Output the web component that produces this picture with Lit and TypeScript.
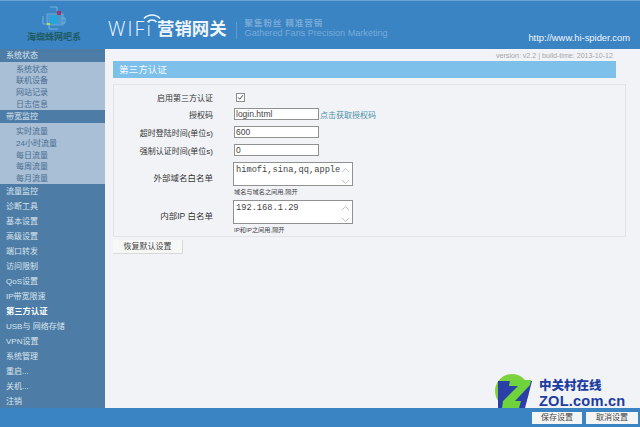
import { LitElement, html, css } from "lit";
import { customElement } from "lit/decorators.js";

@customElement("app-root")
export class AppRoot extends LitElement {
  static styles = css`
    :host { display: block; width: 640px; height: 427px; overflow: hidden; position: relative; font-family: "Liberation Sans", "Noto Sans CJK SC", sans-serif; font-size: 8px; color: #333; background: #f1f3f7; }
    .page { display: flex; flex-direction: column; height: 427px; }
    .top { height: 49px; flex: none; box-sizing: border-box; background: #3a84c4; border-top: 1px solid #6da2d6; display: flex; position: relative; }
    .logo { width: 108px; flex: none; display: flex; flex-direction: column; align-items: center; box-sizing: border-box; }
    .logo svg { margin-top: 5px; }
    .logo span { font-size: 9px; font-weight: 700; line-height: 10px; color: #1f5b63; margin-top: 0; white-space: nowrap; }
    .brand { display: flex; align-items: flex-end; height: 41px; color: #eef5fb; position: relative; }
    .wifi { font-size: 19.500px; letter-spacing: 2.100px; line-height: 26px; font-family: "Open Sans", "Liberation Sans", sans-serif; font-weight: 300; width: 49px; white-space: nowrap; }
    .cn { font-size: 17.400px; font-weight: 700; line-height: 26px; white-space: nowrap; }
    .arc { position: absolute; left: 35px; top: 12px; }
    .sep { width: 1px; height: 17px; background: #5f9bd0; margin: 0 8px 3px 9px; flex: none; }
    .slogan { color: #79abd7; line-height: 10px; padding-bottom: 3px; white-space: nowrap; }
    .slogan b { display: block; font-weight: 700; font-size: 8.500px; letter-spacing: 0.900px; line-height: 10px; }
    .slogan i { font-style: normal; font-size: 9.100px; }
    .url { position: absolute; right: 10px; bottom: 6px; color: #f1f6fb; font-size: 9.400px; line-height: 11px; }
    .mid { flex: 1; display: flex; min-height: 0; }
    .side { width: 105px; flex: none; background: #4d7da6; color: #d9e3ec; }
    .h { padding-left: 6px; height: 15px; line-height: 15px; white-space: nowrap; }
    .h.bold { font-weight: 700; color: #fff; font-size: 8.300px; }
    .h.open { height: 13px; line-height: 13px; }
    .sub { background: #a8bfd5; color: #4a6d92; padding-left: 16px; box-sizing: border-box; }
    .sub div { height: 11.800px; line-height: 11.800px; white-space: nowrap; }
    .sub.a { height: 48px; padding-top: 1.500px; }
    .sub.b { height: 61px; padding-top: 3px; }
    .main { flex: 1; padding-left: 8px; display: flex; flex-direction: column; }
    .ver { width: 500px; text-align: right; height: 12px; line-height: 15px; font-size: 7.100px; color: #a4a6a9; white-space: nowrap; }
    .title { width: 503px; height: 17px; box-sizing: border-box; background: #7dc0ea; color: #f2f8fc; font-size: 9.600px; line-height: 17px; padding-left: 6px; }
    .panel { width: 513px; height: 153px; box-sizing: border-box; margin-top: 6px; border: 1px solid #e2e4e8; padding-top: 6px; }
    .row { display: flex; align-items: center; }
    .lab { width: 99px; text-align: right; flex: none; color: #333; white-space: nowrap; }
    .ctl { margin-left: 21px; display: flex; align-items: center; }
    .r1 { height: 12px; margin-bottom: 5px; }
    .r2 { height: 12px; margin-bottom: 6px; }
    .check { width: 9px; height: 9px; box-sizing: border-box; border: 1px solid #8a8d8f; background: #fff; margin-left: 2px; display: block; }
    .inp { width: 85px; height: 12px; box-sizing: border-box; border: 1px solid #8f9192; background: #fff; font-size: 8.500px; line-height: 10px; color: #444; padding-left: 1px; }
    .link { color: #4d8fa6; margin-left: 1px; }
    .ta { width: 120px; height: 24px; box-sizing: border-box; border: 1px solid #8f9192; background: #fff; font-family: "Liberation Mono", monospace; font-size: 8.700px; line-height: 10px; color: #444; padding: 2px 0 0 2px; position: relative; white-space: nowrap; margin-left: -1px; }
    .ta svg { position: absolute; right: 2px; top: 3px; }
    .block { display: flex; align-items: flex-start; height: 38px; }
    .block .lab { height: 32px; line-height: 32px; font-size: 8.500px; }
    .block .ctl { flex-direction: column; align-items: flex-start; }
    .hint { font-size: 6.200px; line-height: 8px; margin-top: 1.500px; color: #444; white-space: nowrap; }
    .reset { width: 70px; height: 14px; margin-top: 3px; background: #f7f7f5; border-bottom: 1px solid #d8d9da; border-right: 1px solid #d8d9da; box-sizing: border-box; text-align: center; color: #444; line-height: 13px; }
    .bot { height: 19px; flex: none; background: #3a84c4; display: flex; justify-content: flex-end; gap: 4px; padding: 4px 2px 3px 0; box-sizing: border-box; }
    .bot div { width: 50px; background: #f4f5f5; color: #444; text-align: center; line-height: 12px; }
    .bot div + div { width: 52px; }
    .zol { position: absolute; left: 495px; top: 373px; display: flex; gap: 6px; }
    .zol-t { color: #1d3ea0; font-weight: 700; margin-top: 6px; }
    .zol-t b { display: block; font-size: 12.500px; line-height: 14px; }
    .zol-t span { display: block; font-weight: 700; font-size: 14.600px; letter-spacing: 0.200px; line-height: 17px; white-space: nowrap; }
  `;

  arrows() {
    return html`<svg width="9" height="20" viewBox="0 0 9 20" fill="none" stroke="#bfc2c6"><path d="M1 6l3.500-3.500L8 6"/><path d="M1 14l3.500 3.500L8 14"/></svg>`;
  }

  render() {
    const a = ["系统状态", "联机设备", "网站记录", "日志信息"];
    const b = ["实时流量", "24小时流量", "每日流量", "每周流量", "每月流量"];
    const c = ["流量监控", "诊断工具", "基本设置", "高级设置", "端口转发", "访问限制", "QoS设置", "IP带宽限速"];
    const d = ["USB与 网络存储", "VPN设置", "系统管理", "重启...", "关机...", "注销"];
    return html`
      <div class="page">
        <div class="top">
          <div class="logo">
            <svg width="26" height="26" viewBox="0 0 26 26">
              <path d="M9 1h7v4M2 10v8h6v5h9" fill="none" stroke="#6fb2e0"/>
              <rect x="6" y="8" width="16" height="11" fill="#4f95cb" stroke="#6ba7d6"/>
              <rect x="9" y="9" width="8" height="9" fill="#27a4dc"/>
              <rect x="16" y="5" width="4" height="4" fill="#9a3a63"/>
              <rect x="6" y="17" width="3" height="2" fill="#b4e04a"/>
              <path d="M20 12h4v5h-4" fill="none" stroke="#6fb2e0"/>
            </svg>
            <span>海蜘蛛网吧系</span>
          </div>
          <div class="brand">
            <svg class="arc" width="18" height="13" viewBox="0 0 18 13" fill="none" stroke="#eef5fb" stroke-width="1.500"><path d="M1 5.500a11 11 0 0 1 16 0"/><path d="M4.500 9a6 6 0 0 1 9 0"/></svg>
            <span class="wifi">WIFi</span><span class="cn">营销网关</span>
            <span class="sep"></span>
            <span class="slogan"><b>聚集粉丝 精准营销</b><i>Gathered Fans Precision Marketing</i></span>
          </div>
          <div class="url">http://www.hi-spider.com</div>
        </div>
        <div class="mid">
          <div class="side">
            <div class="h open">系统状态</div>
            <div class="sub a">${a.map((t) => html`<div>${t}</div>`)}</div>
            <div class="h open">带宽监控</div>
            <div class="sub b">${b.map((t) => html`<div>${t}</div>`)}</div>
            ${c.map((t) => html`<div class="h">${t}</div>`)}
            <div class="h bold">第三方认证</div>
            ${d.map((t) => html`<div class="h">${t}</div>`)}
          </div>
          <div class="main">
            <div class="ver">version: v2.2 | build-time: 2013-10-12</div>
            <div class="title">第三方认证</div>
            <div class="panel">
              <div class="row r1"><div class="lab">启用第三方认证</div><div class="ctl"><svg class="check" viewBox="0 0 9 9"><path d="M1.500 4.500l2 2.200 4-5" fill="none" stroke="#333" stroke-width="1.200"/></svg></div></div>
              <div class="row r2"><div class="lab">授权码</div><div class="ctl"><div class="inp">login.html</div><span class="link">点击获取授权码</span></div></div>
              <div class="row r2"><div class="lab">超时登陆时间(单位s)</div><div class="ctl"><div class="inp">600</div></div></div>
              <div class="row r2"><div class="lab">强制认证时间(单位s)</div><div class="ctl"><div class="inp">0</div></div></div>
              <div class="block"><div class="lab">外部域名白名单</div><div class="ctl"><div class="ta">himofi,sina,qq,apple${this.arrows()}</div><div class="hint">域名与域名之间用,隔开</div></div></div>
              <div class="block"><div class="lab">内部IP 白名单</div><div class="ctl"><div class="ta">192.168.1.29${this.arrows()}</div><div class="hint">IP和IP之间用,隔开</div></div></div>
            </div>
            <div class="reset">恢复默认设置</div>
          </div>
        </div>
        <div class="bot"><div>保存设置</div><div>取消设置</div></div>
      </div>
      <div class="zol">
        <svg width="38" height="37" viewBox="0 0 38 37">
          <ellipse cx="17" cy="18" rx="17" ry="17" fill="#7ed23e"/>
          <path d="M3 8H37L30 35H3Z" fill="#2a3fa8"/>
          <path d="M15 7H36L35 12 20 28H26L24 35H7L8 28 23 13H14Z" fill="#6fd43c"/>
        </svg>
        <div class="zol-t"><b>中关村在线</b><span>ZOL.com.cn</span></div>
      </div>
    `;
  }
}
